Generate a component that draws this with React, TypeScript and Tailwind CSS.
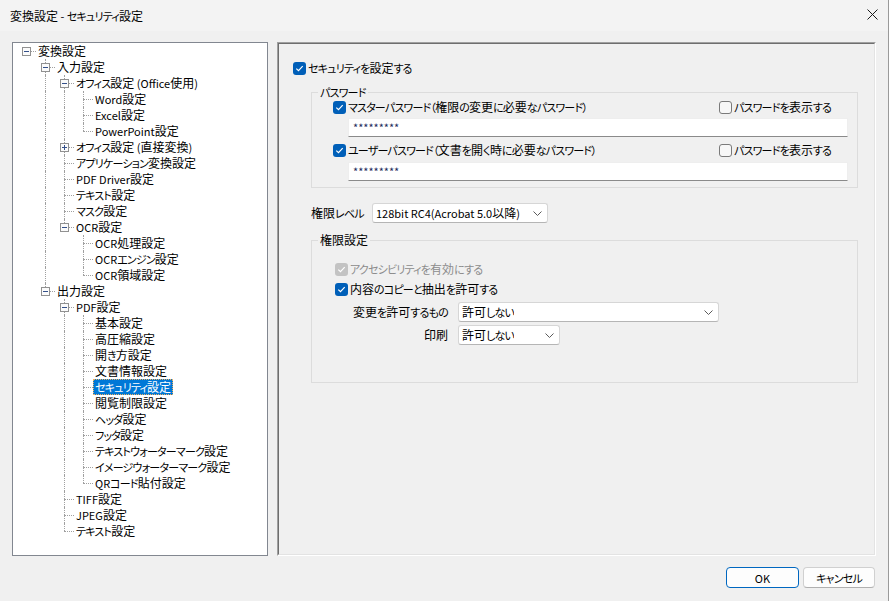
import React from 'react';

type TreeNode = {
  label: string;
  collapsed?: boolean;
  selected?: boolean;
  children?: TreeNode[];
};

type Row = {
  label: string;
  level: number;
  expander: 'minus' | 'plus' | null;
  hasNext: boolean;
  trail: boolean[];
  selected?: boolean;
};

const leaf = (label: string, selected?: boolean): TreeNode => ({ label, selected });

const tree: TreeNode = {
  label: '変換設定',
  children: [
    {
      label: '入力設定',
      children: [
        { label: 'オフィス設定 (Office使用)', children: [leaf('Word設定'), leaf('Excel設定'), leaf('PowerPoint設定')] },
        { label: 'オフィス設定 (直接変換)', collapsed: true },
        leaf('アプリケーション変換設定'),
        leaf('PDF Driver設定'),
        leaf('テキスト設定'),
        leaf('マスク設定'),
        { label: 'OCR設定', children: [leaf('OCR処理設定'), leaf('OCRエンジン設定'), leaf('OCR領域設定')] },
      ],
    },
    {
      label: '出力設定',
      children: [
        {
          label: 'PDF設定',
          children: [
            leaf('基本設定'),
            leaf('高圧縮設定'),
            leaf('開き方設定'),
            leaf('文書情報設定'),
            leaf('セキュリティ設定', true),
            leaf('閲覧制限設定'),
            leaf('ヘッダ設定'),
            leaf('フッタ設定'),
            leaf('テキストウォーターマーク設定'),
            leaf('イメージウォーターマーク設定'),
            leaf('QRコード貼付設定'),
          ],
        },
        leaf('TIFF設定'),
        leaf('JPEG設定'),
        leaf('テキスト設定'),
      ],
    },
  ],
};

function flatten(node: TreeNode, level: number, hasNext: boolean, trail: boolean[], out: Row[]) {
  const expander = node.children ? 'minus' : node.collapsed ? 'plus' : null;
  out.push({ label: node.label, level, expander, hasNext, trail, selected: node.selected });
  const kids = node.children ?? [];
  kids.forEach((c, i) => flatten(c, level + 1, i < kids.length - 1, [...trail, hasNext], out));
  return out;
}

const rows = flatten(tree, 0, false, [], []);

// the UI font has small, narrow kana and narrow latin; kanji stay at full size
const KANJI = /^[\u4e00-\u9fff\u3005]+$/;
const KANA = /^[\u3040-\u30ff\uff08\uff09]+$/;

function J({ t }: { t: string }) {
  const parts = t.split(/([\u3040-\u30ff\uff08\uff09]+|[\u4e00-\u9fff\u3005]+)/).filter(Boolean);
  return (
    <>
      {parts.map((p, i) =>
        KANJI.test(p) ? (
          <React.Fragment key={i}>{p}</React.Fragment>
        ) : KANA.test(p) ? (
          <span key={i} className="text-[11px] tracking-[-0.8px]">
            {p}
          </span>
        ) : (
          <span key={i} className="text-[11px]">
            {p}
          </span>
        )
      )}
    </>
  );
}

function TreeRow({ row }: { row: Row }) {
  return (
    <div className="flex h-[16px] pl-[4px]">
      {row.trail.map((t, k) => (
        <span key={k} className="relative w-[19px] h-[16px] shrink-0">
          {t && k > 0 && <span className="absolute left-[9px] top-0 h-[16px] border-l border-dotted border-[#a0a0a0]" />}
        </span>
      ))}
      <span className="relative w-[19px] h-[16px] shrink-0">
        {row.level > 0 && <span className="absolute left-[9px] top-0 h-[8px] border-l border-dotted border-[#a0a0a0]" />}
        {row.level > 0 && row.hasNext && (
          <span className="absolute left-[9px] top-[8px] h-[8px] border-l border-dotted border-[#a0a0a0]" />
        )}
        {row.expander ? (
          <>
            <span className="absolute left-[14px] top-[8px] w-[5px] border-t border-dotted border-[#a0a0a0]" />
            <span className="absolute left-[5px] top-[4px] w-[9px] h-[9px] border border-[#919191] bg-[#fbfbfb]">
              <span className="absolute left-[1px] top-[3px] w-[5px] h-[1px] bg-[#34508a]" />
              {row.expander === 'plus' && <span className="absolute left-[3px] top-[1px] w-[1px] h-[5px] bg-[#34508a]" />}
            </span>
          </>
        ) : (
          <span className="absolute left-[9px] top-[8px] w-[10px] border-t border-dotted border-[#a0a0a0]" />
        )}
      </span>
      <span
        className={
          row.selected
            ? 'px-[1px] h-[16px] leading-[14px] whitespace-nowrap bg-[#0078d7] text-white border border-dotted border-[#f0b060]'
            : 'px-[2px] h-[16px] leading-[16px] whitespace-nowrap text-black'
        }
      >
        <J t={row.label} />
      </span>
    </div>
  );
}

function Check({ checked, disabled }: { checked?: boolean; disabled?: boolean }) {
  if (!checked) {
    return <span className="w-[13px] h-[13px] shrink-0 rounded-[3px] border border-[#7a7a7a] bg-[#f7f7f7]" />;
  }
  return (
    <span
      className={
        disabled
          ? 'w-[13px] h-[13px] shrink-0 rounded-[3px] bg-[#c3c3c3] flex items-center justify-center'
          : 'w-[13px] h-[13px] shrink-0 rounded-[3px] bg-[#005fb8] flex items-center justify-center'
      }
    >
      <svg width="9" height="9" viewBox="0 0 9 9" fill="none">
        <path d="M1.3 4.6 L3.5 6.7 L7.7 2.2" stroke="white" strokeWidth="1.2" />
      </svg>
    </span>
  );
}

function Chevron() {
  return (
    <svg width="9" height="5" viewBox="0 0 9 5" fill="none" className="shrink-0">
      <path d="M0.5 0.5 L4.5 4.5 L8.5 0.5" stroke="#5a5a5a" strokeWidth="1" />
    </svg>
  );
}

function Select({ width, text }: { width: string; text: string }) {
  return (
    <div
      className={`${width} h-[20px] shrink-0 flex items-center justify-between pl-[3px] pr-[5px] bg-white border border-[#d6d6d6] border-b-[#b5b5b5] rounded-[3px]`}
    >
      <span className="leading-[16px] whitespace-nowrap overflow-hidden">
        <J t={text} />
      </span>
      <Chevron />
    </div>
  );
}

function PasswordInput() {
  return (
    <div className="ml-[15px] w-[500px] h-[19px] bg-white border border-[#eeeeee] border-b-[#8a8a8a] pl-[4px] leading-[17px] text-[11px] text-[#1c2a5a]">
      *********
    </div>
  );
}

function CheckRow({ label, checked, disabled }: { label: string; checked?: boolean; disabled?: boolean }) {
  return (
    <div className="flex items-center gap-[2px]">
      <Check checked={checked} disabled={disabled} />
      <span className={disabled ? 'leading-[16px] whitespace-nowrap text-[#8c8c8c]' : 'leading-[16px] whitespace-nowrap'}>
        <J t={label} />
      </span>
    </div>
  );
}

export default function App() {
  return (
    <div className="w-[889px] h-[601px] bg-[#f0f0f0] border-r border-[#9a9a9a] text-[12px] text-black font-['Noto_Sans_CJK_JP','Noto_Sans',sans-serif] [font-feature-settings:'palt'] overflow-hidden">
      <div className="h-[31px] bg-[#f3f3f3] flex items-center justify-between pl-[10px] pr-[10px]">
        <span className="leading-[16px]">
          <J t="変換設定 - セキュリティ設定" />
        </span>
        <svg width="11" height="11" viewBox="0 0 11 11" className="mb-[3px]">
          <path d="M0.5 0.5 L10.5 10.5 M10.5 0.5 L0.5 10.5" stroke="#1a1a1a" strokeWidth="1" />
        </svg>
      </div>

      <div className="pt-[11px] pl-[12px] pr-[12px]">
        <div className="flex gap-[9px]">
          <div className="w-[256px] h-[514px] border border-[#828790] bg-white overflow-hidden">
            {rows.map((r, i) => (
              <TreeRow key={i} row={r} />
            ))}
          </div>

          <div className="w-[599px] h-[514px] border border-t-[#a0a0a0] border-l-[#a0a0a0] border-r-white border-b-white">
            <div className="h-full border border-t-[#6e6e6e] border-l-[#6e6e6e] border-r-[#e3e3e3] border-b-[#e3e3e3] pl-[14px] pt-[16px]">
              <div className="h-[16px] flex items-center">
                <CheckRow label="セキュリティを設定する" checked />
              </div>

              <fieldset className="ml-[18px] mt-[9px] w-[547px] border border-[#dcdcdc] pb-[6px]">
                <legend className="ml-[6px] px-[2px] h-[14px] leading-[13px]">
                  <J t="パスワード" />
                </legend>
                <div className="ml-[21px] flex h-[16px] items-center">
                  <div className="w-[386px]">
                    <CheckRow label="マスターパスワード（権限の変更に必要なパスワード）" checked />
                  </div>
                  <CheckRow label="パスワードを表示する" />
                </div>
                <div className="ml-[21px] mt-[3px]">
                  <PasswordInput />
                </div>
                <div className="ml-[21px] flex h-[16px] items-center mt-[5px]">
                  <div className="w-[386px]">
                    <CheckRow label="ユーザーパスワード（文書を開く時に必要なパスワード）" checked />
                  </div>
                  <CheckRow label="パスワードを表示する" />
                </div>
                <div className="ml-[21px] mt-[4px]">
                  <PasswordInput />
                </div>
              </fieldset>

              <div className="ml-[18px] mt-[15px] flex items-center h-[20px]">
                <span className="w-[61px] leading-[16px]">
                  <J t="権限レベル" />
                </span>
                <Select width="w-[176px]" text="128bit RC4(Acrobat 5.0以降)" />
              </div>

              <fieldset className="ml-[18px] mt-[10px] w-[547px] border border-[#dcdcdc] pb-[37px]">
                <legend className="ml-[6px] px-[2px] h-[14px] leading-[13px]">権限設定</legend>
                <div className="mt-[14px] ml-[23px] h-[16px] flex items-center">
                  <CheckRow label="アクセシビリティを有効にする" checked disabled />
                </div>
                <div className="mt-[4px] ml-[23px] h-[16px] flex items-center">
                  <CheckRow label="内容のコピーと抽出を許可する" checked />
                </div>
                <div className="mt-[5px] grid grid-cols-[136px_auto] gap-x-[10px] gap-y-[3px] items-center justify-start">
                  <span className="text-right leading-[16px]">
                    <J t="変更を許可するもの" />
                  </span>
                  <Select width="w-[261px]" text="許可しない" />
                  <span className="text-right leading-[16px]">印刷</span>
                  <Select width="w-[102px]" text="許可しない" />
                </div>
              </fieldset>
            </div>
          </div>
        </div>

        <div className="mt-[11px] flex justify-end gap-[4px] pr-[1px]">
          <button className="w-[73px] h-[21px] rounded-[4px] border border-[#0067c0] bg-[#fdfdfd] leading-[16px]">
            <J t="OK" />
          </button>
          <button className="w-[72px] h-[21px] rounded-[4px] border border-[#d0d0d0] border-b-[#b0b0b0] bg-[#fdfdfd] leading-[16px]">
            <J t="キャンセル" />
          </button>
        </div>
      </div>
    </div>
  );
}
